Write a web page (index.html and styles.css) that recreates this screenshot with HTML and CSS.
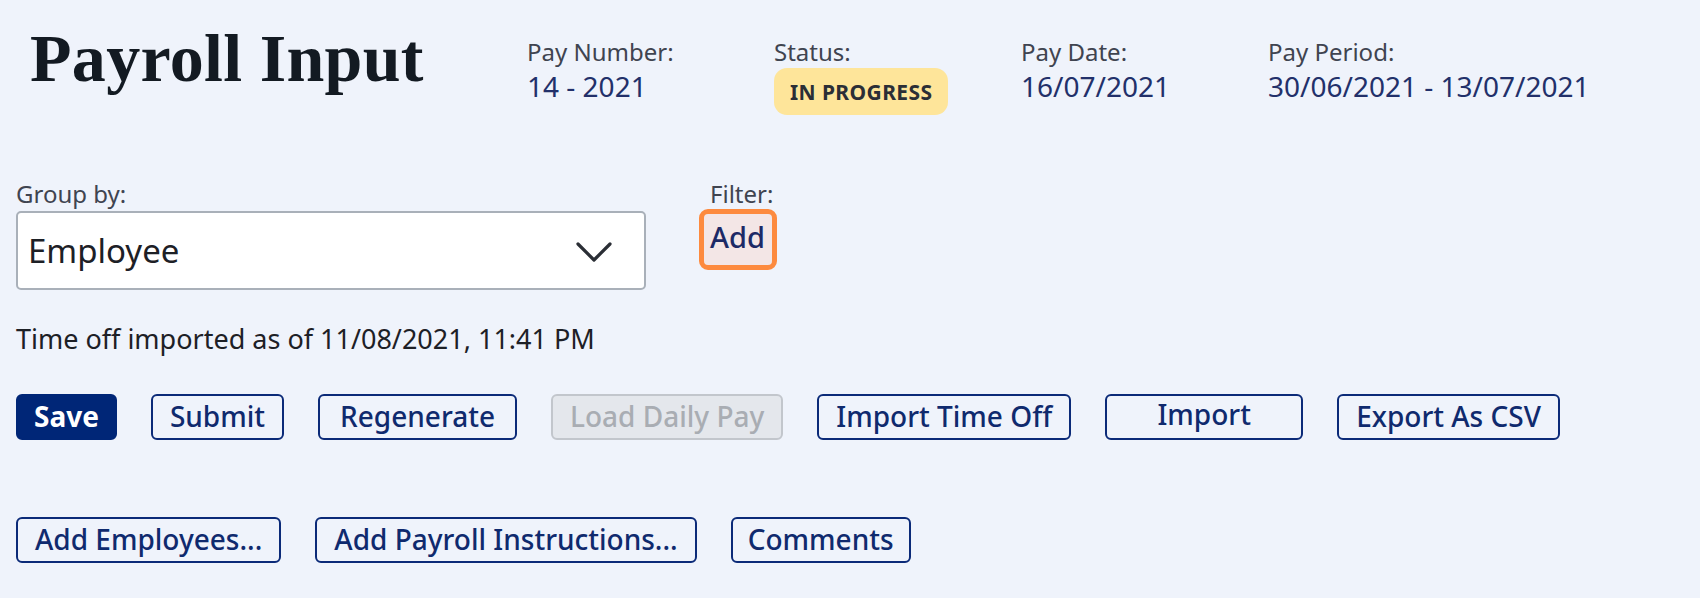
FILE: index.html
```html
<!DOCTYPE html>
<html lang="en">
<head>
<meta charset="utf-8">
<title>Payroll Input</title>
<link rel="stylesheet" href="styles.css">
</head>
<body>
<div class="page">
  <header class="header">
    <h1 class="title">Payroll Input</h1>
    <div class="meta">
      <div class="meta-label">Pay Number:</div>
      <div class="meta-value">14 - 2021</div>
    </div>
    <div class="meta">
      <div class="meta-label">Status:</div>
      <div class="badge">IN PROGRESS</div>
    </div>
    <div class="meta">
      <div class="meta-label">Pay Date:</div>
      <div class="meta-value">16/07/2021</div>
    </div>
    <div class="meta">
      <div class="meta-label">Pay Period:</div>
      <div class="meta-value">30/06/2021 - 13/07/2021</div>
    </div>
  </header>

  <section class="controls">
    <div class="field">
      <div class="field-label">Group by:</div>
      <div class="select">
        <span class="select-text">Employee</span>
        <svg class="chevron" width="38" height="22" viewBox="0 0 38 22" aria-hidden="true">
          <path d="M3 3 L19 19 L35 3" fill="none" stroke="#2a2e35" stroke-width="3.2" stroke-linecap="round" stroke-linejoin="round"/>
        </svg>
      </div>
    </div>
    <div class="field filter">
      <div class="field-label">Filter:</div>
      <button class="link-btn" type="button">Add</button>
    </div>
  </section>

  <p class="note">Time off imported as of 11/08/2021, 11:41 PM</p>

  <div class="btn-row">
    <button class="btn btn-primary" type="button">Save</button>
    <button class="btn" type="button">Submit</button>
    <button class="btn btn-regenerate" type="button">Regenerate</button>
    <button class="btn btn-disabled" type="button" disabled>Load Daily Pay</button>
    <button class="btn" type="button">Import Time Off</button>
    <button class="btn btn-import" type="button">Import</button>
    <button class="btn" type="button">Export As CSV</button>
  </div>

  <div class="btn-row btn-row-2">
    <button class="btn" type="button">Add Employees...</button>
    <button class="btn btn-instructions" type="button">Add Payroll Instructions...</button>
    <button class="btn btn-comments" type="button">Comments</button>
  </div>
</div>
</body>
</html>
```

FILE: styles.css
```css
* { box-sizing: border-box; }

html, body {
  margin: 0;
  padding: 0;
  background: #eff3fb;
}

body {
  font-family: "Noto Sans", "Open Sans", sans-serif;
  color: #1d2026;
}

.page {
  padding: 0 0 0 16px;
}

.header {
  display: grid;
  grid-template-columns: 511px 247px 247px 247px auto;
  align-items: start;
  padding-top: 18px;
}

.title {
  margin: 0 0 0 14px;
  font-family: "Liberation Serif", "Times New Roman", serif;
  font-weight: 700;
  font-size: 68px;
  line-height: 80px;
  color: #131a22;
  letter-spacing: 0.3px;
  white-space: nowrap;
}

.meta {
  margin-top: 18px;
  display: flex;
  flex-direction: column;
  align-items: flex-start;
  white-space: nowrap;
}

.meta-label {
  font-size: 24px;
  line-height: 32px;
  color: #3f4450;
}

.meta-value {
  font-size: 28px;
  line-height: 36px;
  color: #22306a;
}

.badge {
  height: 47px;
  display: flex;
  align-items: center;
  padding: 0 16px;
  background: #fee59a;
  border-radius: 13px;
  font-size: 21px;
  font-weight: 700;
  letter-spacing: 0.4px;
  color: #2b2e36;
}

.controls {
  display: flex;
  align-items: flex-start;
  gap: 58px;
  margin-top: 63px;
}

.field {
  display: flex;
  flex-direction: column;
  align-items: flex-start;
}

.field-label {
  font-size: 24px;
  line-height: 32px;
  color: #3f4450;
}

.select {
  width: 630px;
  height: 79px;
  margin-top: 1px;
  display: flex;
  align-items: center;
  justify-content: space-between;
  padding: 0 31px 0 10px;
  background: #ffffff;
  border: 2px solid #a9b0b9;
  border-radius: 5px;
}

.select-text {
  font-size: 33px;
  color: #1d2026;
}

.chevron { display: block; margin-top: 2px; }

.filter .field-label { padding-left: 6px; }

.link-btn {
  margin-top: 4px;
  height: 51px;
  padding: 0 7px 7px 6px;
  background: #f3e6e6;
  border: none;
  outline: 5px solid #fd8a3e;
  border-radius: 4px;
  font-family: inherit;
  font-size: 29px;
  font-weight: 500;
  line-height: 1;
  color: #1c2a66;
}

.note {
  margin: 32px 0 0 0;
  font-size: 27px;
  line-height: 34px;
  color: #1d2026;
}

.btn-row {
  display: flex;
  gap: 34px;
  margin-top: 38px;
}

.btn-row-2 {
  margin-top: 77px;
}

.btn {
  height: 46px;
  padding: 0 17px 2px;
  display: flex;
  align-items: center;
  justify-content: center;
  background: transparent;
  border: 2px solid #0b2a78;
  border-radius: 6px;
  font-family: inherit;
  font-size: 28px;
  font-weight: 500;
  color: #0f2a6e;
}

.btn-primary {
  background: #002677;
  border-color: #002677;
  color: #ffffff;
  font-weight: 700;
  padding: 0 16px 2px;
}

.btn-regenerate {
  min-width: 199px;
}

.btn-instructions {
  min-width: 381px;
}

.btn-comments {
  padding: 0 15px 2px;
}

.btn-disabled {
  background: #e4e7ec;
  border-color: #c2c6cc;
  color: #a9adb3;
}

.btn-import {
  width: 198px;
  padding-bottom: 7px;
}
```
